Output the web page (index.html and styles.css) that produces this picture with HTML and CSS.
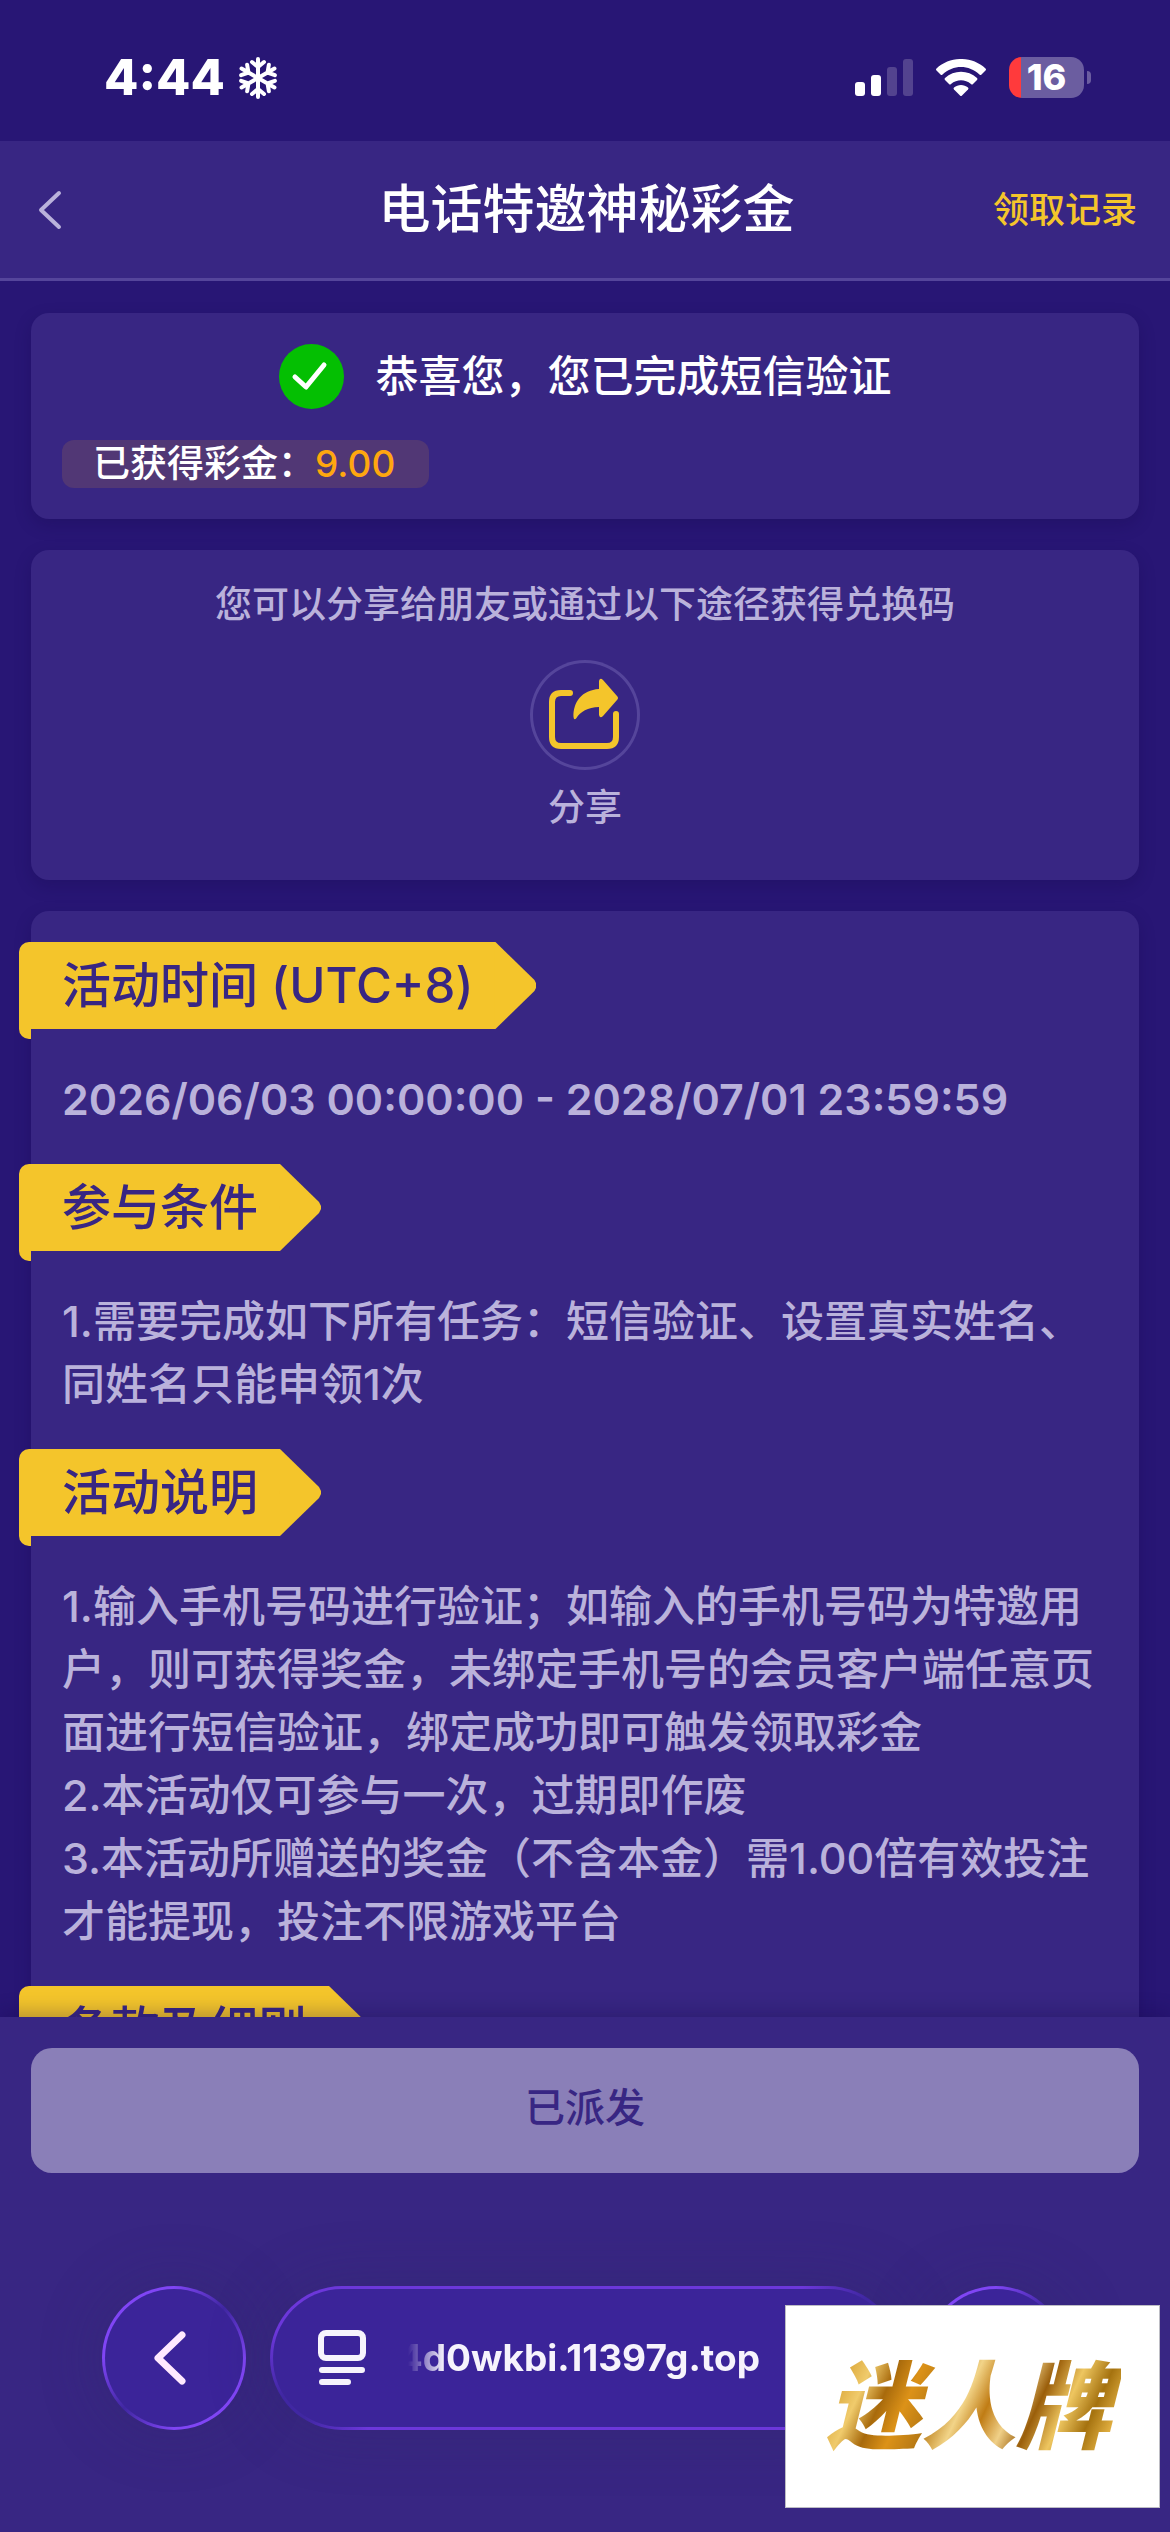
FILE: index.html
```html
<!DOCTYPE html>
<html lang="zh-CN">
<head>
<meta charset="utf-8">
<meta name="viewport" content="width=device-width, initial-scale=1">
<title>电话特邀神秘彩金</title>
<link rel="stylesheet" href="styles.css">
</head>
<body>
<div class="app">
  <div class="status">
    <div class="status-left">
      <span class="clock">4:44</span>
      <svg class="snow" viewBox="0 0 38 44" width="38" height="44" aria-hidden="true">
        <defs><g id="arm"><path d="M19 22V3M13 6l6 5 6-5"/></g></defs>
        <g fill="none" stroke="#fff" stroke-width="4" stroke-linecap="round" stroke-linejoin="round">
          <use href="#arm"/><use href="#arm" transform="rotate(60 19 22)"/><use href="#arm" transform="rotate(120 19 22)"/>
          <use href="#arm" transform="rotate(180 19 22)"/><use href="#arm" transform="rotate(240 19 22)"/><use href="#arm" transform="rotate(300 19 22)"/>
        </g>
      </svg>
    </div>
    <div class="status-right">
      <svg viewBox="0 0 58 38" width="58" height="38" aria-hidden="true">
        <g fill="#fff"><rect x="0" y="23" width="10" height="14" rx="3"/><rect x="16" y="16" width="10" height="21" rx="3"/></g>
        <g fill="#53438f"><rect x="32" y="8" width="10" height="29" rx="3"/><rect x="48" y="0" width="10" height="37" rx="3"/></g>
      </svg>
      <svg viewBox="0 0 52 38" width="52" height="38" aria-hidden="true">
        <g fill="#fff">
          <path d="M1.500 9.500C15-3.200 37-3.200 50.500 9.500q1 1 0 2l-4 4q-1 1-2 0C34 5.500 18 5.500 7.500 15.500q-1 1-2 0l-4-4q-1-1 0-2z"/>
          <path d="M10 19C19 10.600 33 10.600 42 19q1 1 0 2l-4 4q-1 1-2 0c-6-5-14-5-20 0q-1 1-2 0l-4-4q-1-1 0-2z"/>
          <path d="M19 28.500c4-3.500 10-3.500 14 0q1 1 0 2l-6 6q-1 1-2 0l-6-6q-1-1 0-2z"/>
        </g>
      </svg>
      <div class="battery"><span class="battery-body">16</span><span class="battery-cap"></span></div>
    </div>
  </div>

  <header class="header">
    <button class="back" type="button" aria-label="返回">
      <svg viewBox="0 0 26 40" width="26" height="40" aria-hidden="true"><path d="M23 3L5 20l18 17" fill="none" stroke="#bab2db" stroke-width="4" stroke-linecap="round" stroke-linejoin="round"/></svg>
    </button>
    <h1 class="title">电话特邀神秘彩金</h1>
    <a class="records" href="#records">领取记录</a>
  </header>

  <main class="content">
    <section class="card done">
      <div class="done-row">
        <svg viewBox="0 0 65 65" width="65" height="65" aria-hidden="true"><circle cx="32.500" cy="32.500" r="32.500" fill="#04bf02"/><path d="M16 33l11 10 18-22" fill="none" stroke="#fff" stroke-width="5" stroke-linecap="round" stroke-linejoin="round"/></svg>
        <span class="done-text">恭喜您，您已完成短信验证</span>
      </div>
      <p class="bonus">已获得彩金：<span class="amount">9.00</span></p>
    </section>

    <section class="card share">
      <p class="share-text">您可以分享给朋友或通过以下途径获得兑换码</p>
      <button class="share-btn" type="button">
        <span class="share-ring">
          <svg viewBox="0 0 110 110" width="110" height="110" aria-hidden="true">
            <path d="M40 33H31q-9 0-9 9v35q0 9 9 9h46q9 0 9-9V54" fill="none" stroke="#f4c52b" stroke-width="6" stroke-linecap="round"/>
            <path d="M69 21q1-4 4-1l14 16q2 2 0 4L73 56q-3 3-4-1V47C58 47 50 52 46.500 58q-2.500 3-3-1C43 42 52 30 69 29z" fill="#f4c52b"/>
          </svg>
        </span>
        <span>分享</span>
      </button>
    </section>

    <section class="card rules">
      <h2 class="ribbon">活动时间 (UTC+8)</h2>
      <p class="rule period">2026/06/03 00:00:00 - 2028/07/01 23:59:59</p>
      <h2 class="ribbon">参与条件</h2>
      <p class="rule">1.需要完成如下所有任务：短信验证、设置真实姓名、同姓名只能申领1次</p>
      <h2 class="ribbon">活动说明</h2>
      <p class="rule">1.输入手机号码进行验证；如输入的手机号码为特邀用户，则可获得奖金，未绑定手机号的会员客户端任意页面进行短信验证，绑定成功即可触发领取彩金<br>2.本活动仅可参与一次，过期即作废<br>3.本活动所赠送的奖金（不含本金）需1.00倍有效投注才能提现，投注不限游戏平台</p>
      <h2 class="ribbon">条款及细则</h2>
    </section>
  </main>

  <footer class="footer">
    <button class="claim" type="button" disabled>已派发</button>
    <nav class="browser" aria-label="浏览器">
      <button class="round" type="button" aria-label="后退">
        <svg viewBox="0 0 40 60" width="40" height="60" aria-hidden="true"><path d="M31 7L7 30l24 23" fill="none" stroke="#ffe9ff" stroke-width="7" stroke-linecap="round" stroke-linejoin="round"/></svg>
      </button>
      <div class="address">
        <svg viewBox="0 0 48 56" width="48" height="56" aria-hidden="true">
          <g fill="none" stroke="#f6f3fc" stroke-width="6" stroke-linecap="round"><rect x="3" y="3" width="42" height="25" rx="5"/><path d="M4 40h40M4 52h26"/></g>
        </svg>
        <span class="url"><span>4d0wkbi.11397g.top</span></span>
      </div>
      <button class="round" type="button" aria-label="更多"></button>
    </nav>
  </footer>

  <aside class="brand"><span class="brand-text">迷人牌</span></aside>
</div>
</body>
</html>
```
FILE: styles.css
```css
:root {
  --page: #281675;
  --panel: #382683;
  --muted: #bab2db;
  --gold: #f4c52b;
  --line: #55459b;
  --space: 31px;
}

* { box-sizing: border-box; }

body {
  margin: 0;
  background: var(--page);
  color: #fff;
  font-family: Inter, "Noto Sans CJK SC", sans-serif;
  font-weight: 500;
}

h1, h2, p { margin: 0; font-weight: 500; }

button {
  padding: 0;
  border: 0;
  background: none;
  color: inherit;
  font: inherit;
}

svg { display: block; flex: none; }

.app {
  position: relative;
  display: flex;
  flex-direction: column;
  height: 100vh;
  overflow: hidden;
}

/* Status bar */
.status {
  display: flex;
  flex: none;
  align-items: center;
  justify-content: space-between;
  padding: 46px 79px 32px 104px;
}

.status-left { display: flex; align-items: center; gap: 14px; }

.clock { font-size: 50px; line-height: 63px; font-weight: 800; }

.status-right { display: flex; align-items: center; gap: 22px; }

.battery { display: flex; align-items: center; gap: 3px; }

.battery-body {
  width: 75px;
  border-radius: 13px;
  background: linear-gradient(90deg, #ff3a3c 12px, #6b5da0 12px);
  font-size: 36px;
  line-height: 41px;
  font-weight: 800;
  text-align: center;
}

.battery-cap { width: 4px; height: 13px; border-radius: 0 4px 4px 0; background: #6b5da0; }

/* Title bar */
.header {
  display: grid;
  flex: none;
  grid-template-columns: 1fr auto 1fr;
  align-items: center;
  padding: 30px 33px 29px 36px;
  border-bottom: 3px solid var(--line);
  background: var(--panel);
}

.back { justify-self: start; }

.title { font-size: 52px; line-height: 78px; }

.records {
  justify-self: end;
  color: var(--gold);
  font-size: 36px;
  line-height: 48px;
  text-decoration: none;
}

/* Cards */
.content {
  display: flex;
  flex: 1;
  flex-direction: column;
  gap: var(--space);
  min-height: 0;
  padding: 32px var(--space) 0;
  overflow: hidden;
}

.card {
  flex: none;
  padding: var(--space);
  border-radius: 18px;
  background: var(--panel);
  box-shadow: 0 6px 16px rgba(20, 8, 70, 0.25);
}

.done-row {
  display: flex;
  align-items: center;
  justify-content: center;
  gap: 32px;
  margin-bottom: var(--space);
}

.done-text { font-size: 43px; line-height: 63px; }

.bonus {
  width: fit-content;
  padding: 0 34px 0 31px;
  border-radius: 12px;
  background: #513775;
  font-size: 37px;
  line-height: 48px;
}

.amount { color: #ffa70f; }

.share {
  padding-bottom: 48px;
  color: var(--muted);
  font-size: 37px;
  line-height: 48px;
  text-align: center;
}

.share-text { margin-bottom: var(--space); }

.share-btn {
  display: flex;
  flex-direction: column;
  align-items: center;
  gap: 14px;
  margin: 0 auto;
}

.share-ring { border-radius: 50%; box-shadow: inset 0 0 0 3px var(--line); }

.ribbon {
  position: relative;
  width: fit-content;
  margin-left: -43px;
  padding: 0 22px 0 43px;
  border-radius: 10px 0 0 0;
  background: var(--gold);
  color: var(--panel);
  font-size: 49px;
  line-height: 87px;
}

.ribbon::before {
  content: "";
  position: absolute;
  top: 77px;
  left: 0;
  width: 12px;
  height: 20px;
  border-radius: 0 0 0 10px;
  background: var(--gold);
}

.ribbon::after {
  content: "";
  position: absolute;
  top: 0;
  left: calc(100% - 1px);
  width: 42px;
  height: 87px;
  background: var(--gold);
  clip-path: polygon(0 0, 1px 0, 40px 38px, 42px 42px, 42px 45px, 40px 49px, 1px 100%, 0 100%);
}

.rule {
  margin: 39px 0 33px;
  color: var(--muted);
  font-size: 43px;
  line-height: 63px;
}

.period { font-weight: 600; }

/* Bottom area */
.footer {
  position: relative;
  flex: none;
  padding: var(--space) var(--space) 102px;
  background: var(--panel);
  box-shadow: 0 -4px 18px rgba(20, 8, 70, 0.3);
}

.claim {
  width: 100%;
  padding-bottom: 5px;
  border-radius: 21px;
  background: #8a7fb8;
  color: var(--panel);
  font-size: 40px;
  line-height: 120px;
}

.browser {
  display: flex;
  gap: 24px;
  margin-top: 113px;
  padding: 0 71px;
}

.round, .address {
  height: 144px;
  border: 3px solid transparent;
  border-radius: 72px;
  box-shadow: 0 0 60px rgba(50, 42, 100, 0.35);
}

.round {
  display: flex;
  flex: none;
  align-items: center;
  width: 144px;
  padding-left: 46px;
  background:
    linear-gradient(#3b2499, #3b2499) padding-box,
    linear-gradient(135deg, #8045f5 25%, #4027a2 50%, #8045f5 75%) border-box;
}

.address {
  display: flex;
  flex: 1;
  align-items: center;
  gap: 42px;
  min-width: 0;
  padding-left: 45px;
  background:
    linear-gradient(#3b2499, #3b2499) padding-box,
    radial-gradient(circle 80px at calc(100% - 20px) 20px, #4027a2 20%, transparent) border-box,
    radial-gradient(circle 80px at 20px calc(100% - 20px), #4027a2 20%, transparent) border-box,
    linear-gradient(#6c37da, #6c37da) border-box;
}

.url {
  display: flex;
  justify-content: flex-end;
  width: 352px;
  overflow: hidden;
  color: #f6f3fc;
  font-size: 37px;
  line-height: 48px;
  font-weight: 700;
  -webkit-mask-image: linear-gradient(90deg, transparent, #000 36px);
  mask-image: linear-gradient(90deg, transparent, #000 36px);
}

/* Brand plate floating over the page */
.brand {
  position: absolute;
  right: 10px;
  bottom: 24px;
  padding: 31px 38px;
  border: 1px solid #bdbdc4;
  background: #fff;
}

.brand-text {
  display: block;
  padding: 0 10px 0 2px;
  background: linear-gradient(115deg, #a66c0c, #d9a334 9%, #f0cb6c 17%, #a86a0c 24%, #dc9218 31%, #b87a14 39%, #f2d488 47%, #c07c14 54%, #f0d088 61%, #9a5e0a 68%, #eec660 76%, #a5720f 84%, #e0ae40 91%, #8f5c0a);
  -webkit-background-clip: text;
  background-clip: text;
  color: transparent;
  font-size: 95px;
  line-height: 139px;
  font-style: italic;
  font-weight: 900;
}
```
